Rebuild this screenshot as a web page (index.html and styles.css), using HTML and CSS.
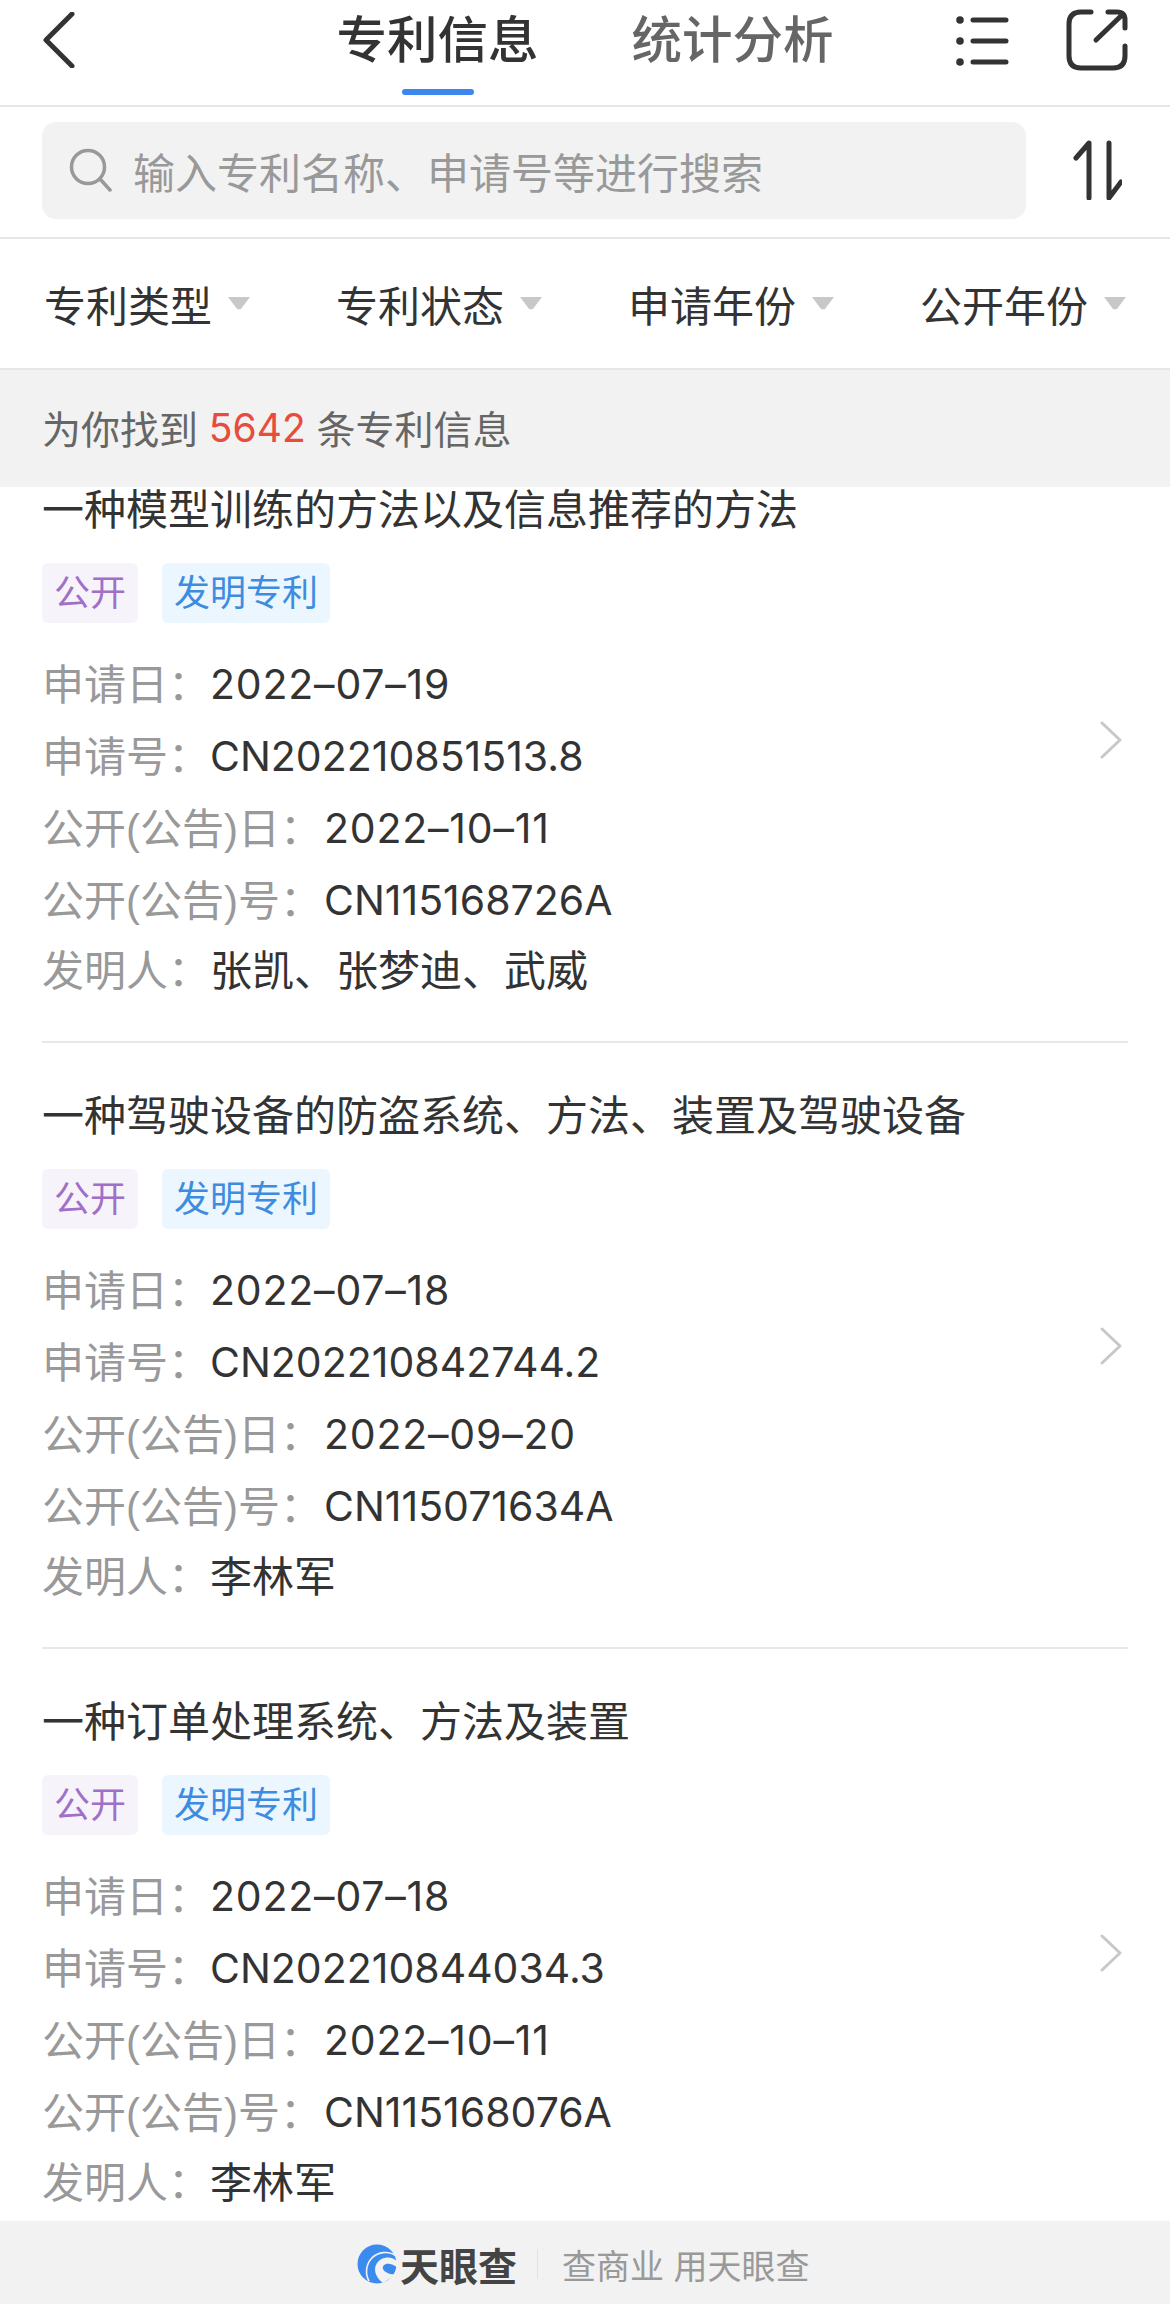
FILE: index.html
```html
<!DOCTYPE html>
<html lang="zh-CN">
<head>
<meta charset="utf-8">
<title>专利信息</title>
<link rel="stylesheet" href="styles.css">
</head>
<body>
<div class="page">
  <header class="topbar">
    <svg class="back" width="34" height="56" viewBox="0 0 34 56"><path d="M30 2 L4 28 L30 54"/></svg>
    <nav class="tabs">
      <div class="tab tab-on">专利信息<span class="tab-mark"></span></div>
      <div class="tab">统计分析</div>
    </nav>
    <div class="actions">
      <svg width="54" height="52" viewBox="0 0 54 52"><circle cx="4" cy="5" r="3.8" class="dot"/><circle cx="4" cy="26" r="3.8" class="dot"/><circle cx="4" cy="47" r="3.8" class="dot"/><path class="bars" d="M17 5H50M17 26H50M17 47H50"/></svg>
      <svg width="62" height="62" viewBox="0 0 62 62"><path class="share" d="M25 3H15Q3 3 3 15V47Q3 59 15 59H47Q59 59 59 47V37M42 3H51Q59 3 59 11V19M56 6L30 31"/></svg>
    </div>
  </header>

  <div class="searchbar">
    <div class="searchbox">
      <svg width="44" height="44" viewBox="0 0 44 44"><circle cx="19" cy="19" r="16.5" class="lens"/><path class="lens" d="M31 31L41 42"/></svg>
      <span class="placeholder">输入专利名称、申请号等进行搜索</span>
    </div>
    <svg class="sort" width="50" height="60" viewBox="0 0 50 60"><path d="M17 58V3L4 18M37 3V58L49 42"/></svg>
  </div>

  <div class="filters">
    <div class="filter">专利类型<span class="caret"></span></div>
    <div class="filter">专利状态<span class="caret"></span></div>
    <div class="filter">申请年份<span class="caret"></span></div>
    <div class="filter">公开年份<span class="caret"></span></div>
  </div>

  <div class="count">为你找到 <span class="count-num">5642</span> 条专利信息</div>

  <main class="list">
    <div class="list-inner">
      <article class="card">
        <div class="card-body">
          <h2 class="title">一种模型训练的方法以及信息推荐的方法</h2>
          <div class="tags"><span class="tag tag-purple">公开</span><span class="tag tag-blue">发明专利</span></div>
          <div class="row"><span class="label">申请日：</span><span class="num date">2022–07–19</span></div>
          <div class="row"><span class="label">申请号：</span><span class="num">CN202210851513.8</span></div>
          <div class="row"><span class="label label-long">公开(公告)日：</span><span class="num date">2022–10–11</span></div>
          <div class="row"><span class="label label-long">公开(公告)号：</span><span class="num">CN115168726A</span></div>
          <div class="row"><span class="label">发明人：</span>张凯、张梦迪、武威</div>
        </div>
        <svg class="chev" width="24" height="38" viewBox="0 0 24 38"><path d="M3 2L21 19L3 36"/></svg>
      </article>
      <article class="card">
        <div class="card-body">
          <h2 class="title">一种驾驶设备的防盗系统、方法、装置及驾驶设备</h2>
          <div class="tags"><span class="tag tag-purple">公开</span><span class="tag tag-blue">发明专利</span></div>
          <div class="row"><span class="label">申请日：</span><span class="num date">2022–07–18</span></div>
          <div class="row"><span class="label">申请号：</span><span class="num">CN202210842744.2</span></div>
          <div class="row"><span class="label label-long">公开(公告)日：</span><span class="num date">2022–09–20</span></div>
          <div class="row"><span class="label label-long">公开(公告)号：</span><span class="num">CN115071634A</span></div>
          <div class="row"><span class="label">发明人：</span>李林军</div>
        </div>
        <svg class="chev" width="24" height="38" viewBox="0 0 24 38"><path d="M3 2L21 19L3 36"/></svg>
      </article>
      <article class="card">
        <div class="card-body">
          <h2 class="title">一种订单处理系统、方法及装置</h2>
          <div class="tags"><span class="tag tag-purple">公开</span><span class="tag tag-blue">发明专利</span></div>
          <div class="row"><span class="label">申请日：</span><span class="num date">2022–07–18</span></div>
          <div class="row"><span class="label">申请号：</span><span class="num">CN202210844034.3</span></div>
          <div class="row"><span class="label label-long">公开(公告)日：</span><span class="num date">2022–10–11</span></div>
          <div class="row"><span class="label label-long">公开(公告)号：</span><span class="num">CN115168076A</span></div>
          <div class="row"><span class="label">发明人：</span>李林军</div>
        </div>
        <svg class="chev" width="24" height="38" viewBox="0 0 24 38"><path d="M3 2L21 19L3 36"/></svg>
      </article>
    </div>
  </main>

  <footer class="footer">
    <svg width="40" height="40" viewBox="0 0 40 40">
      <circle cx="20" cy="20" r="19.5" fill="#3b8bef"/>
      <path d="M39.500 12C31 6 20 8 14 15C9 21 8 30 12 37" fill="none" stroke="#f2f2f2" stroke-width="1.6"/>
      <path d="M40 17C33 11 24 13 20 19C16 25 18 33 26 39L40 30C34 31 28 29 26 25C25 22 28 19 33 20C36 20.500 39 22 40 24Z" fill="#f2f2f2"/>
    </svg>
    <span class="brand">天眼查</span>
    <span class="footer-sep"></span>
    <span class="slogan">查商业 用天眼查</span>
  </footer>
</div>
</body>
</html>
```

FILE: styles.css
```css
* { box-sizing: border-box; }
html, body { margin: 0; padding: 0; background: #fff; }
body { font-family: "Liberation Sans", "Noto Sans CJK SC", sans-serif; color: #333; }
.page { width: 1170px; height: 2304px; display: flex; flex-direction: column; overflow: hidden; }

.topbar { height: 107px; flex: none; border-bottom: 2px solid #e6e6e6; display: grid; grid-template-columns: 1fr auto 1fr; align-items: start; padding: 0 42px; }
.back { margin-top: 12px; fill: none; stroke: #333; stroke-width: 5; stroke-linecap: round; stroke-linejoin: round; }
.tabs { display: flex; gap: 93px; }
.tab { height: 95px; padding-top: 10px; font-size: 50.5px; line-height: 62px; color: #666; font-weight: 500; display: flex; flex-direction: column; align-items: center; }
.tab-on { color: #333; }
.tab-mark { width: 72px; height: 6px; margin-top: auto; background: #3d86f0; border-radius: 3px; }
.actions { display: flex; justify-content: flex-end; align-items: flex-start; gap: 56px; }
.actions svg:first-child { margin-top: 15px; }
.actions svg:last-child { margin-top: 9px; }
.dot { fill: #333; }
.bars { stroke: #333; stroke-width: 5; stroke-linecap: round; fill: none; }
.share { stroke: #333; stroke-width: 5; stroke-linecap: round; stroke-linejoin: round; fill: none; }

.searchbar { height: 132px; flex: none; border-bottom: 2px solid #e6e6e6; display: flex; align-items: center; padding: 0 48px 4px 42px; justify-content: space-between; }
.searchbox { width: 984px; height: 97px; background: #f2f2f2; border-radius: 14px; display: flex; align-items: center; padding-left: 27px; gap: 20px; }
.lens { stroke: #999; stroke-width: 3.5; fill: none; stroke-linecap: round; }
.placeholder { font-size: 42px; color: #999; }
.sort { fill: none; stroke: #333; stroke-width: 5; stroke-linecap: round; stroke-linejoin: round; }

.filters { height: 129px; flex: none; display: flex; justify-content: space-between; align-items: center; padding: 0 44px; }
.filter { font-size: 42px; color: #333; display: flex; align-items: center; gap: 16px; }
.caret { width: 22px; height: 13px; background: #c8c8c8; clip-path: polygon(0 0, 100% 0, 58% 95%, 42% 95%); }

.count { height: 119px; flex: none; background: #f2f2f2; border-top: 2px solid #e6e6e6; display: flex; align-items: center; padding: 0 0 3px 42px; font-size: 39px; color: #666; white-space: pre; }
.count-num { font-family: Inter, "Liberation Sans", sans-serif; font-size: 39px; color: #e74c3c; }

.list { flex: 1; overflow: hidden; }
.list-inner { margin-top: -50px; padding: 0 42px; }
.card { height: 606px; border-bottom: 2px solid #e8e8e8; display: flex; align-items: center; padding-top: 44px; }
.card:last-child { border-bottom: 0; }
.card-body { flex: 1; align-self: flex-start; }
.title { margin: 0; font-size: 42px; line-height: 60px; font-weight: 400; color: #333; }
.tags { display: flex; gap: 24px; margin: 22px 0 25px; }
.tag { height: 60px; line-height: 62px; font-size: 36px; padding: 0 12px; border-radius: 6px; }
.tag-purple { background: #f7f3fb; color: #a06fc8; }
.tag-blue { background: #ecf6ff; color: #3d8ce0; }
.row { height: 72px; line-height: 72px; font-size: 42px; color: #333; }
.label { color: #999; }
.label-long { margin-right: 2px; }
.num { font-family: Inter, "Liberation Sans", sans-serif; font-size: 41px; vertical-align: 1px; }
.date { letter-spacing: 0.8px; }
.chev { margin: 0 5px 42px 0; fill: none; stroke: #c8c8c8; stroke-width: 3; stroke-linecap: round; stroke-linejoin: round; }

.footer { height: 83px; flex: none; background: #f2f2f2; display: flex; align-items: center; padding: 3px 0 0 357px; }
.brand { font-size: 39px; font-weight: 700; color: #444; margin-left: 3px; }
.footer-sep { width: 1px; height: 30px; background: #e2e2e2; margin: 0 24px 0 20px; }
.slogan { font-size: 34px; color: #999; }
```
